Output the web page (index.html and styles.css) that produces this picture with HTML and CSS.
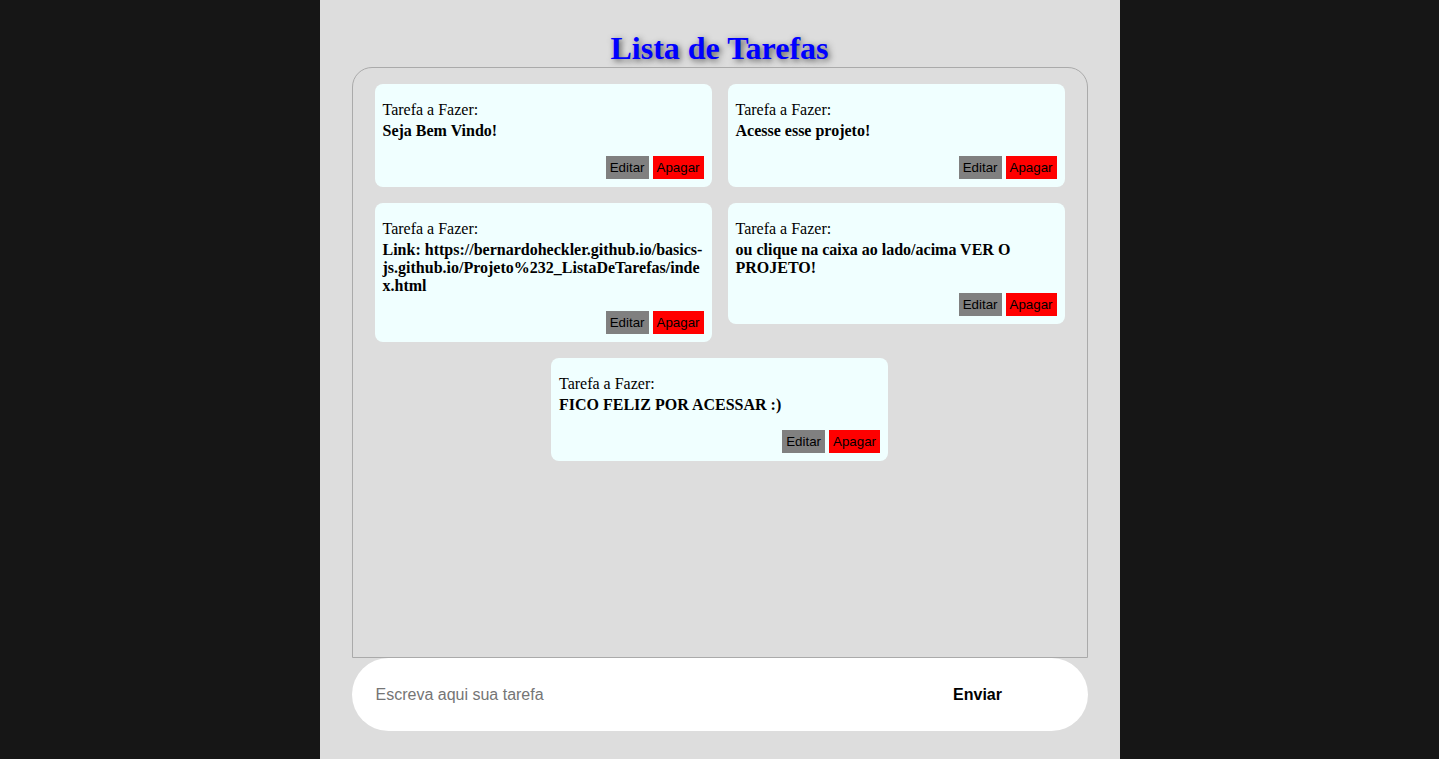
FILE: index.html
```html
<!DOCTYPE html>
<html lang="pt-BR">
<head>
<meta charset="utf-8">
<title>Lista de Tarefas</title>
<link rel="stylesheet" href="styles.css">
</head>
<body>
<main class="app">
  <h1 class="title">Lista de Tarefas</h1>
  <section class="board">
    <div class="card">
      <div class="label">Tarefa a Fazer:</div>
      <div class="task">Seja Bem Vindo!</div>
      <div class="actions"><button class="btn edit">Editar</button><button class="btn del">Apagar</button></div>
    </div>
    <div class="card">
      <div class="label">Tarefa a Fazer:</div>
      <div class="task">Acesse esse projeto!</div>
      <div class="actions"><button class="btn edit">Editar</button><button class="btn del">Apagar</button></div>
    </div>
    <div class="card">
      <div class="label">Tarefa a Fazer:</div>
      <div class="task">Link: https://bernardoheckler.github.io/basics-js.github.io/Projeto%232_ListaDeTarefas/index.html</div>
      <div class="actions"><button class="btn edit">Editar</button><button class="btn del">Apagar</button></div>
    </div>
    <div class="card">
      <div class="label">Tarefa a Fazer:</div>
      <div class="task">ou clique na caixa ao lado/acima VER O PROJETO!</div>
      <div class="actions"><button class="btn edit">Editar</button><button class="btn del">Apagar</button></div>
    </div>
    <div class="card">
      <div class="label">Tarefa a Fazer:</div>
      <div class="task">FICO FELIZ POR ACESSAR :)</div>
      <div class="actions"><button class="btn edit">Editar</button><button class="btn del">Apagar</button></div>
    </div>
  </section>
  <form class="composer">
    <input class="field" type="text" placeholder="Escreva aqui sua tarefa">
    <button class="send" type="button">Enviar</button>
  </form>
</main>
</body>
</html>
```
FILE: styles.css
```css
html, body {
  margin: 0;
  height: 100%;
}
body {
  background: #161616;
  font-family: "Liberation Serif", "Times New Roman", serif;
  display: flex;
  justify-content: center;
}
.app {
  width: 800px;
  min-height: 100%;
  background: #dddddd;
  padding: 0 32px;
  box-sizing: border-box;
  display: flex;
  flex-direction: column;
}
.title {
  margin: 30px 0 0;
  font-size: 32px;
  line-height: 37px;
  font-weight: bold;
  text-align: center;
  color: #0000ff;
  text-shadow: 2px 2px 6px #555;
}
.board {
  height: 591px;
  box-sizing: border-box;
  border: 1px solid #aaaaaa;
  border-radius: 20px 20px 0 0;
  padding: 16px 22px;
  display: flex;
  flex-wrap: wrap;
  justify-content: center;
  align-items: flex-start;
  align-content: flex-start;
  gap: 16px;
}
.card {
  width: 337px;
  box-sizing: border-box;
  background: #f0ffff;
  border-radius: 8px;
  padding: 8px;
}
.label {
  margin-top: 9px;
  font-size: 16px;
  line-height: 18px;
  color: #000;
}
.task {
  margin-top: 3px;
  font-size: 16px;
  line-height: 18px;
  font-weight: bold;
  color: #000;
  overflow-wrap: break-word;
}
.actions {
  margin-top: 16px;
  display: flex;
  justify-content: flex-end;
  gap: 4px;
}
.btn {
  border: none;
  padding: 4px 4px;
  font-family: "Liberation Sans", Arial, sans-serif;
  font-size: 13.33px;
  line-height: 15px;
  color: #000;
  cursor: pointer;
}
.edit { background: #808080; }
.del { background: #ff0000; }
.composer {
  height: 73px;
  margin: 0;
  background: #fff;
  border-radius: 37px;
  display: flex;
  align-items: center;
  padding: 0 0 0 24px;
}
.field {
  flex: 1;
  border: none;
  outline: none;
  background: transparent;
  font-family: "Liberation Sans", Arial, sans-serif;
  font-size: 16px;
  color: #000;
  padding: 0;
}
.field::placeholder { color: #757575; }
.send {
  width: 150px;
  margin-right: 35px;
  border: none;
  background: transparent;
  font-family: "Liberation Sans", Arial, sans-serif;
  font-size: 16px;
  font-weight: bold;
  color: #000;
}
```
